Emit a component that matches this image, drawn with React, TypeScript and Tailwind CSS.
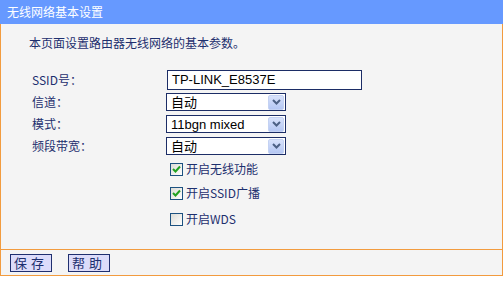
const cjk = { fontFamily: '"Noto Sans CJK SC", "Liberation Sans", sans-serif' };
const latin = { fontFamily: '"Liberation Sans", "Noto Sans CJK SC", sans-serif' };

function Arrow() {
  return (
    <span className="flex h-[15px] w-[16px] items-center justify-center rounded-[2px] bg-gradient-to-b from-[#d8e2fb] to-[#b5c7f3] border border-[#c4d2f3]">
      <svg width="9" height="6" viewBox="0 0 9 6">
        <path d="M1 1 L4.5 4.5 L8 1" stroke="#4d6185" strokeWidth="2" fill="none" />
      </svg>
    </span>
  );
}

function Select({ value }: { value: string }) {
  return (
    <div className="flex h-[18px] w-[120px] items-center justify-between border border-[#1c2d66] bg-white pl-[4px] pr-[1px] text-[13px] text-black" style={latin}>
      <span className="leading-none">{value}</span>
      <Arrow />
    </div>
  );
}

function Check({ checked, label }: { checked: boolean; label: string }) {
  return (
    <div className="flex items-center gap-[3px] pl-[4px]">
      <span className="flex h-[13px] w-[13px] items-center justify-center border border-[#1c5180] bg-gradient-to-br from-[#dcdcd6] to-white">
        {checked && (
          <svg width="9" height="8" viewBox="0 0 9 8">
            <path d="M1 4 L3.5 6.5 L8 1.5" stroke="#21a121" strokeWidth="2" fill="none" />
          </svg>
        )}
      </span>
      <span className="text-[12px] text-[#1d2f6e]" style={cjk}>{label}</span>
    </div>
  );
}

function Row({ label, children, className }: { label: string; children: React.ReactNode; className?: string }) {
  return (
    <div className={"flex items-center " + (className ?? "")}>
      <span className="w-[134px] text-[12px] text-[#1d2f6e]" style={cjk}>{label}</span>
      {children}
    </div>
  );
}

export default function App() {
  return (
    <div className="h-[286px] w-[503px] bg-white" style={cjk}>
      <div className="flex h-[24px] items-center bg-[#6699ff] pl-[7px] text-[12px] text-white">无线网络基本设置</div>
      <div className="border-x border-[#f29b3e] bg-[#f4f4f4]">
        <div className="h-[46px] pl-[28px] pt-[11px] text-[12px] leading-[16px] text-[#1d2f6e]">本页面设置路由器无线网络的基本参数。</div>
        <div className="flex flex-col pl-[31px]">
          <Row label="SSID号：" className="h-[20px]">
            <div className="ml-[1px] flex h-[20px] w-[195px] items-center border border-[#1c2d66] bg-white pl-[4px] text-[13px] text-black" style={latin}>TP-LINK_E8537E</div>
          </Row>
          <Row label="信道：" className="mt-[3px]"><Select value="自动" /></Row>
          <Row label="模式：" className="mt-[4px]"><Select value="11bgn mixed" /></Row>
          <Row label="频段带宽：" className="mt-[4px]"><Select value="自动" /></Row>
          <div className="ml-[134px] mt-[2px] flex flex-col">
            <div className="flex h-[24px] items-center"><Check checked label="开启无线功能" /></div>
            <div className="flex h-[24px] items-center"><Check checked label="开启SSID广播" /></div>
            <div className="flex h-[28px] items-center"><Check checked={false} label="开启WDS" /></div>
          </div>
        </div>
        <div className="h-[16px]" />
        <div className="flex h-[27px] items-center gap-[16px] border-y border-[#f29b3e] pl-[9px]">
          <button className="h-[18px] w-[42px] border border-[#1f2f6f] bg-[#dcdcfa] text-[13px] leading-none tracking-[4px] text-[#1d2f6e]">保存</button>
          <button className="h-[18px] w-[42px] border border-[#1f2f6f] bg-[#dcdcfa] text-[13px] leading-none tracking-[4px] text-[#1d2f6e]">帮助</button>
        </div>
      </div>
    </div>
  );
}
